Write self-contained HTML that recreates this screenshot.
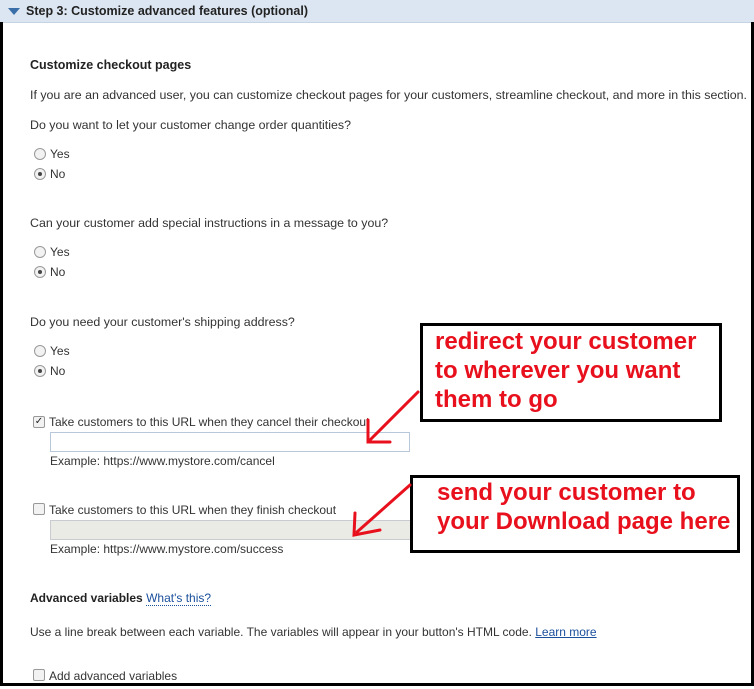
<!DOCTYPE html>
<html><head><style>
body{margin:0;width:754px;height:689px;overflow:hidden;background:#fff;font-family:"Liberation Sans",Arial,sans-serif;color:#333;font-size:12px}
.frame{position:absolute;left:0;width:748px;border:3px solid #000;border-top:none;z-index:5}
.hdr{position:absolute;left:0;top:0;width:754px;height:22px;background:#dce6f2;border-bottom:1px solid #c5d3e3}
.hdr span{position:absolute;left:26px;top:4px;font-weight:bold;font-size:12.5px;color:#222}
.tri{position:absolute;left:8px;top:8px;width:0;height:0;border-left:6px solid transparent;border-right:6px solid transparent;border-top:7px solid #3a6ea8}
.t{position:absolute;white-space:nowrap}
.b{font-weight:bold;color:#222}
.r{position:absolute;width:10px;height:10px;border:1px solid #999;border-radius:50%;background:#f2f2f2}
.r.on::after{content:"";position:absolute;left:3px;top:3px;width:4px;height:4px;border-radius:50%;background:#444}
.c{position:absolute;width:10px;height:10px;border:1px solid #999;background:#f2f2f2;border-radius:2px;font-size:10px;line-height:10px;text-align:center;color:#222}
.box{position:absolute;border:3px solid #000;background:#fff;color:#e8101c;font-weight:bold;font-size:24px;line-height:29px}
a{color:#1a4f9c}
</style></head><body>
<div class="hdr"><div class="tri"></div><span>Step 3: Customize advanced features (optional)</span></div>
<div class="frame" style="top:22px;height:661px"></div>
<div class="t b" style="left:30px;top:58px;font-size:12.5px">Customize checkout pages</div>
<div class="t" style="left:30px;top:88px;font-size:12.4px">If you are an advanced user, you can customize checkout pages for your customers, streamline checkout, and more in this section.</div>
<div class="t" style="left:30px;top:118px;font-size:12.4px">Do you want to let your customer change order quantities?</div>
<div class="r" style="left:34px;top:148px"></div><div class="t" style="left:50px;top:147px">Yes</div>
<div class="r on" style="left:34px;top:168px"></div><div class="t" style="left:50px;top:167px">No</div>
<div class="t" style="left:30px;top:216px;font-size:12.4px">Can your customer add special instructions in a message to you?</div>
<div class="r" style="left:34px;top:246px"></div><div class="t" style="left:50px;top:245px">Yes</div>
<div class="r on" style="left:34px;top:266px"></div><div class="t" style="left:50px;top:265px">No</div>
<div class="t" style="left:30px;top:315px;font-size:12.4px">Do you need your customer's shipping address?</div>
<div class="r" style="left:34px;top:345px"></div><div class="t" style="left:50px;top:344px">Yes</div>
<div class="r on" style="left:34px;top:365px"></div><div class="t" style="left:50px;top:364px">No</div>
<div class="c" style="left:33px;top:416px">✓</div><div class="t" style="left:49px;top:415px">Take customers to this URL when they cancel their checkout</div>
<div style="position:absolute;left:50px;top:432px;width:358px;height:18px;border:1px solid #b8c8da;background:#fff"></div>
<div class="t" style="left:50px;top:454px">Example: https://www.mystore.com/cancel</div>
<div class="c" style="left:33px;top:503px"></div><div class="t" style="left:49px;top:503px">Take customers to this URL when they finish checkout</div>
<div style="position:absolute;left:50px;top:520px;width:360px;height:18px;border:1px solid #c8ccd0;background:#ebebe6"></div>
<div class="t" style="left:50px;top:542px">Example: https://www.mystore.com/success</div>
<div class="t" style="left:30px;top:591px"><span class="b">Advanced variables</span> <a style="text-decoration:none;border-bottom:1px dotted #1a4f9c">What's this?</a></div>
<div class="t" style="left:30px;top:625px">Use a line break between each variable. The variables will appear in your button's HTML code. <a style="text-decoration:underline">Learn more</a></div>
<div class="c" style="left:33px;top:669px"></div><div class="t" style="left:49px;top:669px">Add advanced variables</div>
<div class="box" style="left:420px;top:323px;box-sizing:border-box;width:302px;height:99px;padding:1px 0 0 12px">redirect your customer<br>to wherever you want<br>them to go</div>
<div class="box" style="left:410px;top:475px;width:330px;height:78px;box-sizing:border-box;padding:0 0 0 24px">send your customer to<br>your Download page here</div>
<svg style="position:absolute;left:0;top:0" width="754" height="689">
<g stroke="#e8101c" stroke-width="3" fill="none" stroke-linecap="round">
<path d="M418 392 L370 440"/><path d="M368 420 L368 442 L390 442"/>
<path d="M410 485 L357 532"/><path d="M355 513 L354 535 L380 530"/>
</g></svg>
</body></html>
